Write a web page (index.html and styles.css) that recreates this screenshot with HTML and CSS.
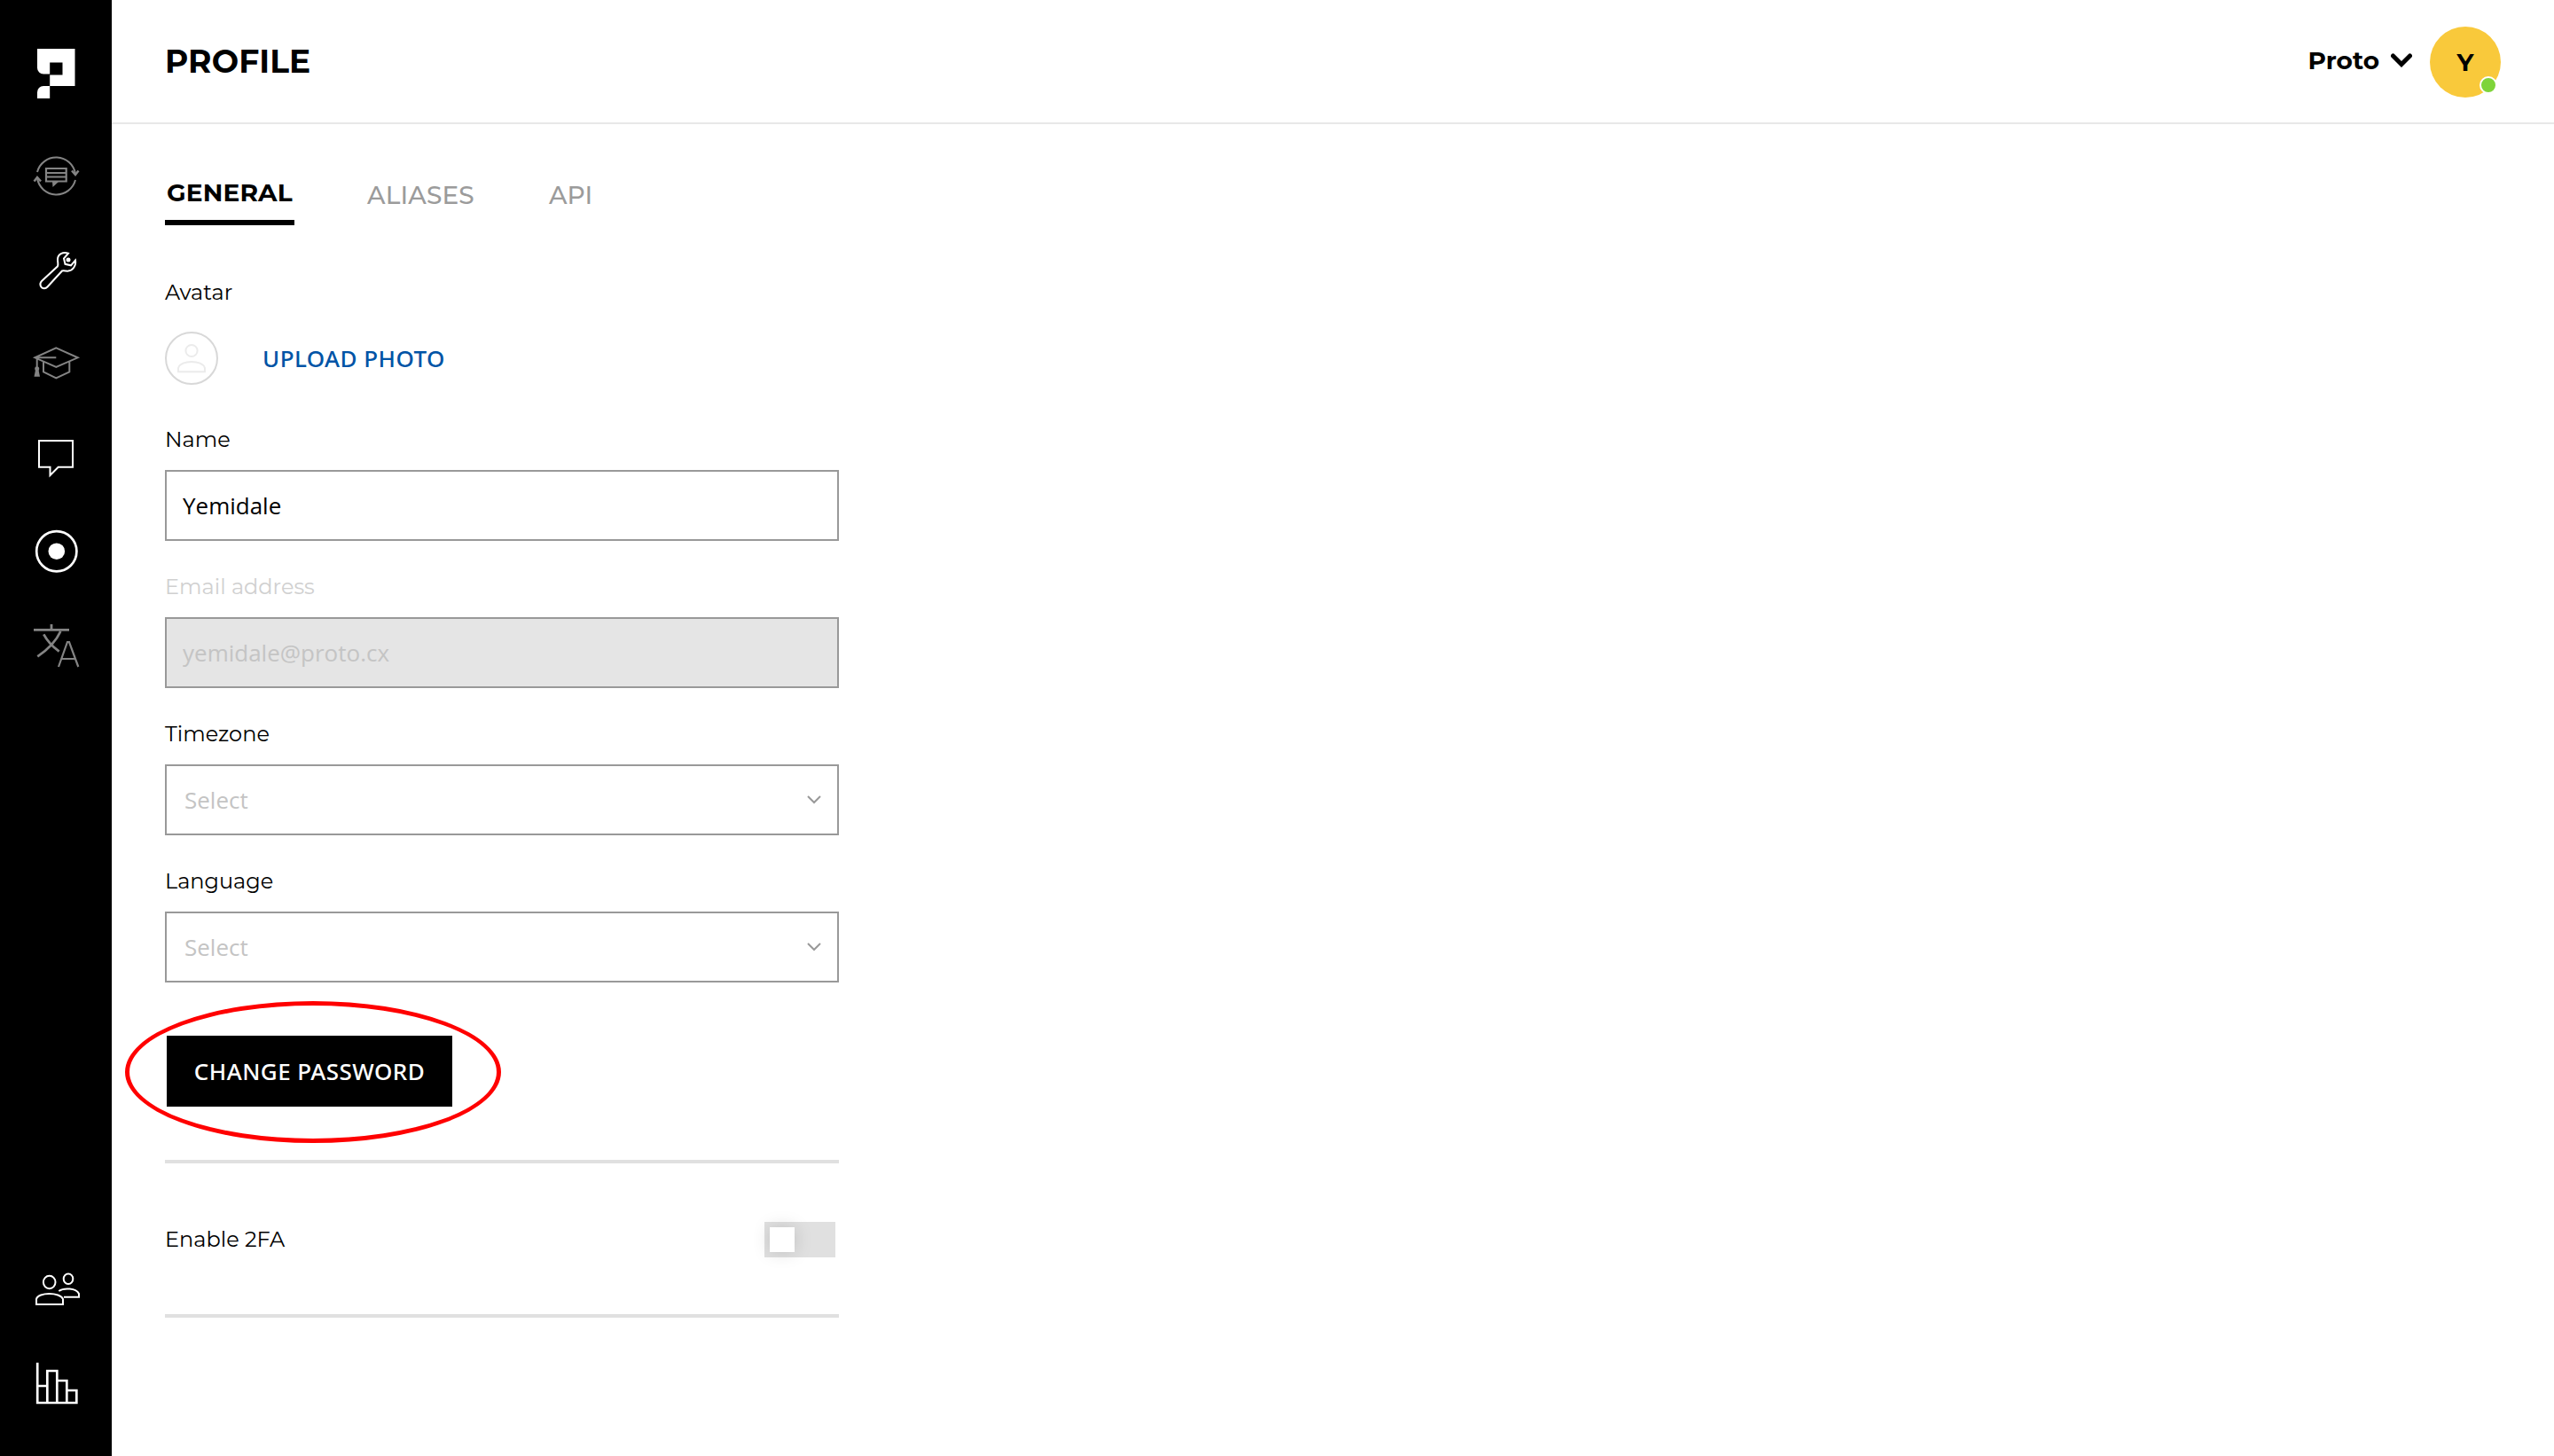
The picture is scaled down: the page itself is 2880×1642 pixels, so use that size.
FILE: index.html
```html
<!DOCTYPE html>
<html lang="en">
<head>
  <meta charset="UTF-8" />
  <title>Profile</title>
  <link rel="stylesheet" href="styles.css">
</head>
<body>

  <nav class="sidebar">
    <svg class="logo" viewBox="0 0 43 56" fill="#fff">
      <path d="M0 0H42.500V42H14.200V28.500H7A7 7 0 0 1 0 21.500ZM14.200 15.500V29.500H28.500V15.500Z" fill-rule="evenodd"/>
      <path d="M14.200 42V56H0V49A7 7 0 0 1 7 42Z"/>
    </svg>

    <a href="#" class="nav-item muted">
      <svg viewBox="0 0 56 56">
        <path d="M7 24A22 22 0 0 1 50 26M50 33A22 22 0 0 1 7 31"/>
        <path d="M46 22.500L50 27L53.500 22.500M3.500 34.500L7 30L11 34.500" stroke-width="2.500"/>
        <path d="M17 20H39.700V34.500H17ZM17 25H39M17 29.500H39" stroke-width="2.200"/>
        <path class="solid" d="M24 35H31L24.500 41Z"/>
      </svg>
    </a>
    <a href="#" class="nav-item">
      <svg viewBox="0 0 56 56">
        <path d="M42 9.700C36 7.500 30 11 30 16.500C30 20 31 22 30 24.300L12 41C9 44 10.500 49.300 15 49.300Q17 49.300 18.500 47.500L35 29.500C37.500 29 39 29.800 42 29.600C47 29 51 24 50 17.500L45 23.300L38.500 21.800L37 15.500Z"/>
        <circle class="solid" cx="42" cy="17" r="2.500"/>
      </svg>
    </a>
    <a href="#" class="nav-item muted">
      <svg viewBox="0 0 56 56">
        <path d="M28.300 10.300L52.700 21.300L28.300 32L4.300 21.300ZM4.300 21.300H28.300M14 25.700V37.300L28.300 44.500L43.300 37.300V25M6.700 21.300V34"/>
        <path class="solid" d="M5 35H8.500L10 42.700H3.500Z"/>
        <circle class="solid" cx="6.700" cy="33.700" r="2.500"/>
      </svg>
    </a>
    <a href="#" class="nav-item">
      <svg viewBox="0 0 56 56">
        <path d="M9 9H47V38.700H30.700L21.500 48V38.700H9Z"/>
      </svg>
    </a>
    <a href="#" class="nav-item">
      <svg viewBox="0 0 56 56">
        <circle cx="28.800" cy="27.700" r="22.600" stroke-width="2.700"/>
        <circle class="solid" cx="28.800" cy="27.700" r="9.300"/>
      </svg>
    </a>
    <a href="#" class="nav-item muted">
      <svg viewBox="0 0 56 56">
        <path d="M3 10.300H43M23 4V10M33.300 12Q26 28 7.300 40.300M14.300 15.300Q20 26 31.700 34.700" stroke-width="2.800"/>
        <path d="M31 52L41 24H43L53.300 52M34.500 43H50" stroke-width="2.200"/>
      </svg>
    </a>

    <a href="#" class="nav-item nav-bottom">
      <svg viewBox="0 0 56 56">
        <ellipse cx="20.700" cy="20" rx="6.800" ry="7.300"/>
        <path d="M6 45H36V39C33 31 8 31 6 39Z"/>
        <ellipse cx="42" cy="16.300" rx="5.300" ry="5.800"/>
        <path d="M31.300 30C37 26 51 26.500 54 33V36.700H37"/>
      </svg>
    </a>
    <a href="#" class="nav-item">
      <svg viewBox="0 0 56 56">
        <path d="M7.200 4.700V50H51.300V36H40.300M7.200 31H18.300M18.300 50V14H29.300V50M29.300 25H40.300V50" stroke-width="2.700"/>
      </svg>
    </a>
  </nav>

  <div class="page">
    <div class="header">
      <h1>PROFILE</h1>
      <div class="account">
        <span class="company">Proto</span>
        <svg class="account-arrow" viewBox="0 0 24 16"><path d="M2.500 3L12 12.500L21.500 3"/></svg>
        <div class="user">Y<span class="status"></span></div>
      </div>
    </div>

    <div class="content">
      <div class="tabs">
        <a href="#" class="tab active">GENERAL</a>
        <a href="#" class="tab aliases">ALIASES</a>
        <a href="#" class="tab">API</a>
      </div>

      <div class="label">Avatar</div>
      <div class="avatar-row">
        <div class="avatar">
          <svg viewBox="0 0 56 56">
            <circle cx="28" cy="19.500" r="6.600"/>
            <path d="M13 43.300V39C16 29.500 40 29.500 43 39V43.300Z"/>
          </svg>
        </div>
        <a href="#" class="upload">UPLOAD PHOTO</a>
      </div>

      <div class="field">
        <label class="label" for="name">Name</label>
        <input type="text" id="name" value="Yemidale" />
      </div>
      <div class="field disabled">
        <label class="label" for="email">Email address</label>
        <input type="text" id="email" value="yemidale@proto.cx" disabled />
      </div>
      <div class="field">
        <div class="label">Timezone</div>
        <div class="select"><span>Select</span><svg viewBox="0 0 16 10"><path d="M1 1L8 8L15 1"/></svg></div>
      </div>
      <div class="field">
        <div class="label">Language</div>
        <div class="select"><span>Select</span><svg viewBox="0 0 16 10"><path d="M1 1L8 8L15 1"/></svg></div>
      </div>

      <div class="password">
        <button class="change-btn">CHANGE PASSWORD</button>
        <div class="highlight"></div>
      </div>

      <div class="two-factor">
        <div class="label">Enable 2FA</div>
        <div class="toggle"><div class="knob"></div></div>
      </div>
    </div>
  </div>

</body>
</html>
```
FILE: styles.css
```css
* {
  box-sizing: border-box;
}

body {
  margin: 0;
  display: flex;
  min-height: 100vh;
  background: #fff;
  color: #000;
  font-family: "Montserrat", "Inter", sans-serif;
}

a {
  text-decoration: none;
}

.sidebar {
  width: 126px;
  height: 1642px;
  background: #000;
  display: flex;
  flex-direction: column;
  align-items: center;
  gap: 50px;
  padding: 55px 0 54px;
}

.logo {
  width: 43px;
  height: 56px;
  margin-bottom: 9px;
}

.nav-item {
  height: 56px;
  color: #fff;
}

.nav-item.muted {
  color: #848484;
}

.nav-item svg {
  display: block;
  width: 56px;
  height: 56px;
  fill: none;
  stroke: currentColor;
  stroke-width: 2;
}

.nav-item .solid {
  fill: currentColor;
  stroke: none;
}

.nav-bottom {
  margin-top: auto;
}

.page {
  flex: 1;
}

.header {
  height: 140px;
  border-bottom: 2px solid #e8e8e8;
  padding: 0 60px;
  display: flex;
  justify-content: space-between;
  align-items: center;
}

.header h1 {
  margin: 0;
  font-size: 36px;
  font-weight: 700;
  letter-spacing: 0.1px;
}

.account {
  display: flex;
  align-items: center;
  padding-top: 2px;
}

.company {
  font-size: 28px;
  font-weight: 700;
  margin-bottom: 5px;
}

.account-arrow {
  width: 24px;
  height: 16px;
  margin: 0 20px 4px 13px;
  fill: none;
  stroke: #000;
  stroke-width: 5;
  stroke-linecap: round;
}

.user {
  position: relative;
  width: 80px;
  height: 80px;
  border-radius: 50%;
  background: #f9c93b;
  font-size: 28px;
  font-weight: 700;
  line-height: 80px;
  text-align: center;
}

.status {
  position: absolute;
  right: 4px;
  bottom: 4px;
  width: 20px;
  height: 20px;
  border: 2px solid #fff;
  border-radius: 50%;
  background: #7ed43a;
}

.content {
  width: 820px;
  padding: 50px 0 0 60px;
}

.tabs {
  display: flex;
  align-items: flex-start;
  height: 64px;
  margin-bottom: 61px;
}

.tab {
  color: #9b9b9b;
  font-size: 28px;
  font-weight: 500;
  letter-spacing: 0.15px;
  line-height: 40px;
  padding-top: 10px;
}

.tab.active {
  width: 146px;
  height: 64px;
  border-bottom: 6px solid #000;
  padding: 7px 0 0 2px;
  color: #000;
  font-weight: 700;
}

.tab.aliases {
  margin: 0 84px 0 82px;
}

.label {
  display: block;
  font-size: 24px;
  line-height: 30px;
}

.avatar-row {
  display: flex;
  align-items: center;
  gap: 50px;
  margin: 29px 0 47px;
}

.avatar {
  width: 60px;
  height: 60px;
  border: 2px solid #d8d8d8;
  border-radius: 50%;
}

.avatar svg {
  display: block;
  fill: none;
  stroke: #ebebeb;
  stroke-width: 2;
}

.upload,
.change-btn {
  font-family: "Noto Sans", "Open Sans", sans-serif;
  font-size: 26px;
  font-weight: 500;
  letter-spacing: 0.45px;
}

.upload {
  color: #0054a6;
}

.field {
  margin-bottom: 37px;
}

.field input,
.select {
  display: flex;
  justify-content: space-between;
  align-items: center;
  width: 760px;
  height: 80px;
  margin-top: 19px;
  border: 2px solid #999;
  padding: 0 18px;
  background: #fff;
  color: #000;
  font-family: "Open Sans", sans-serif;
  font-size: 26px;
}

.select {
  padding-left: 20px;
  color: #c4c4c4;
}

.select svg {
  width: 16px;
  height: 10px;
  fill: none;
  stroke: #999;
  stroke-width: 2;
}

.disabled .label {
  color: #d0d0d0;
}

.disabled input {
  background: #e5e5e5;
  color: #c4c4c4;
}

.password {
  position: relative;
  margin-top: 60px;
  padding-left: 2px;
}

.change-btn {
  display: block;
  width: 322px;
  height: 80px;
  border: none;
  padding: 0;
  background: #000;
  color: #fff;
}

/* red ring around the button */
.highlight {
  position: absolute;
  left: -45px;
  top: -39px;
  width: 424px;
  height: 160px;
  border: 5px solid #f00;
  border-radius: 50%;
}

.two-factor {
  display: flex;
  justify-content: space-between;
  align-items: center;
  height: 178px;
  margin-top: 60px;
  border-top: 4px solid #e0e0e0;
  border-bottom: 4px solid #e0e0e0;
  padding: 2px 4px 0 0;
}

.toggle {
  width: 80px;
  height: 40px;
  padding: 6px;
  background: #e0e0e0;
}

.knob {
  width: 28px;
  height: 28px;
  background: #fff;
  box-shadow: 0 0 20px rgba(0,0,0,0.15);
}
```
